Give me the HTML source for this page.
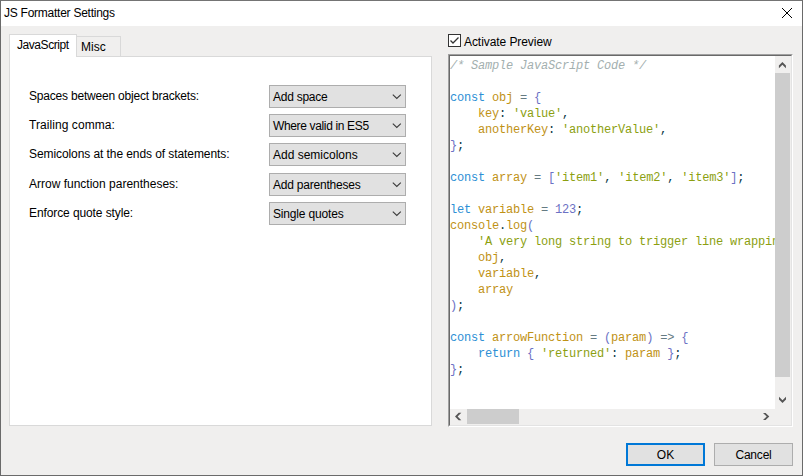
<!DOCTYPE html>
<html><head><meta charset="utf-8">
<style>
*{box-sizing:border-box;margin:0;padding:0}
html,body{width:803px;height:476px;overflow:hidden;background:#f0efee}
body{position:relative;font-family:"Liberation Sans",sans-serif;font-size:12px;color:#000}
.a{position:absolute}
.t{position:absolute;white-space:pre;line-height:14px;height:14px}
#frame{left:0;top:0;width:803px;height:476px;border:1px solid #6a6a6a;border-top-color:#747474}
#title{left:1px;top:1px;width:801px;height:25px;background:#fff}
.tab{position:absolute;border:1px solid #d9d9d9;border-bottom:none}
#panel{left:9px;top:56px;width:423px;height:370px;background:#fff;border:1px solid #d9d9d9}
.cb{position:absolute;left:269px;width:137px;height:23px;background:#e1e1e1;border:1px solid #adadad}
.cb span{position:absolute;left:3px;top:4px;line-height:14px;white-space:pre}
.cb svg{position:absolute;left:122px;top:8px}
.btn{position:absolute;top:443px;width:79px;height:23px;background:#e1e1e1;border:1px solid #adadad;text-align:center}
pre{font-family:"Liberation Mono",monospace;font-size:12px;line-height:16px;letter-spacing:-0.2px;color:#073642}
.k{color:#2d8fd5}.v{color:#bf9215}.s{color:#8c9f10}.p{color:#6c71c4}.o{color:#657b83}.c{color:#a3afaf;font-style:italic}
</style></head><body>
<div class="a" id="frame"></div>
<div class="a" id="title"></div>
<div class="t" style="left:4px;top:6px;letter-spacing:-0.25px">JS Formatter Settings</div>
<svg class="a" style="left:781px;top:7px" width="12" height="12" viewBox="0 0 12 12"><path d="M1 1L11 11M11 1L1 11" stroke="#000" stroke-width="1"/></svg>

<!-- tabs -->
<div id="panel" class="a"></div>
<div class="tab" style="left:76px;top:36px;width:45px;height:20px;background:#f0efee"></div>
<div class="tab" style="left:9px;top:34px;width:68px;height:23px;background:#fff"></div>
<div class="t" style="left:17px;top:38px;letter-spacing:-0.44px">JavaScript</div>
<div class="t" style="left:81px;top:40px">Misc</div>

<div class="t" style="left:29px;top:89px;letter-spacing:-0.2px">Spaces between object brackets:</div>
<div class="t" style="left:29px;top:118px;letter-spacing:0.07px">Trailing comma:</div>
<div class="t" style="left:29px;top:147px;letter-spacing:-0.08px">Semicolons at the ends of statements:</div>
<div class="t" style="left:29px;top:177px">Arrow function parentheses:</div>
<div class="t" style="left:29px;top:206px;letter-spacing:-0.1px">Enforce quote style:</div>

<div class="cb" style="top:85px"><span style="letter-spacing:-0.25px">Add space</span><svg width="10" height="7"><path d="M0.8 0.6L4.8 4.4L8.8 0.6" fill="none" stroke="#3a3a3a" stroke-width="1.1"/></svg></div>
<div class="cb" style="top:114px"><span style="letter-spacing:-0.35px">Where valid in ES5</span><svg width="10" height="7"><path d="M0.8 0.6L4.8 4.4L8.8 0.6" fill="none" stroke="#3a3a3a" stroke-width="1.1"/></svg></div>
<div class="cb" style="top:143px"><span>Add semicolons</span><svg width="10" height="7"><path d="M0.8 0.6L4.8 4.4L8.8 0.6" fill="none" stroke="#3a3a3a" stroke-width="1.1"/></svg></div>
<div class="cb" style="top:173px"><span style="letter-spacing:-0.21px">Add parentheses</span><svg width="10" height="7"><path d="M0.8 0.6L4.8 4.4L8.8 0.6" fill="none" stroke="#3a3a3a" stroke-width="1.1"/></svg></div>
<div class="cb" style="top:202px"><span style="letter-spacing:-0.17px">Single quotes</span><svg width="10" height="7"><path d="M0.8 0.6L4.8 4.4L8.8 0.6" fill="none" stroke="#3a3a3a" stroke-width="1.1"/></svg></div>

<!-- checkbox -->
<div class="a" style="left:448px;top:34px;width:13px;height:13px;border:1px solid #333;background:#fff"></div>
<svg class="a" style="left:448px;top:34px" width="13" height="13"><path d="M2.5 6.5L5 9L10.5 3.5" fill="none" stroke="#333" stroke-width="1.3"/></svg>
<div class="t" style="left:464px;top:35px;letter-spacing:-0.07px">Activate Preview</div>

<!-- code -->
<div class="a" style="left:448px;top:54px;width:345px;height:373px;border:1px solid;border-color:#a0a0a0 #fff #fff #a0a0a0"></div>
<div class="a" style="left:449px;top:55px;width:343px;height:371px;border:1px solid;border-color:#696969 #e3e3e3 #e3e3e3 #696969;background:#fff"></div>
<div class="a" style="left:450px;top:56px;width:325px;height:353px;overflow:hidden">
<pre class="a" style="left:0px;top:2px">
<span class="c">/* Sample JavaScript Code */</span>

<span class="k">const</span> <span class="v">obj</span> <span class="o">=</span> <span class="p">{</span>
    <span class="v">key</span>: <span class="s">'value'</span>,
    <span class="v">anotherKey</span>: <span class="s">'anotherValue'</span>,
<span class="p">}</span>;

<span class="k">const</span> <span class="v">array</span> <span class="o">=</span> <span class="p">[</span><span class="s">'item1'</span>, <span class="s">'item2'</span>, <span class="s">'item3'</span><span class="p">]</span>;

<span class="k">let</span> <span class="v">variable</span> <span class="o">=</span> <span class="p">123</span>;
<span class="v">console</span>.<span class="v">log</span><span class="p">(</span>
    <span class="s">'A very long string to trigger line wrapping when the preview is narrow'</span>,
    <span class="v">obj</span>,
    <span class="v">variable</span>,
    <span class="v">array</span>
<span class="p">)</span>;

<span class="k">const</span> <span class="v">arrowFunction</span> <span class="o">=</span> <span class="p">(</span><span class="v">param</span><span class="p">)</span> <span class="o">=&gt;</span> <span class="p">{</span>
    <span class="k">return</span> <span class="p">{</span> <span class="s">'returned'</span>: <span class="v">param</span> <span class="p">}</span>;
<span class="p">}</span>;
</pre>
</div>
<div class="a" style="left:775px;top:56px;width:16px;height:353px;background:#f0efee"></div>
<div class="a" style="left:775px;top:73px;width:15px;height:304px;background:#cdcdcd"></div>
<div class="a" style="left:450px;top:409px;width:325px;height:16px;background:#f0efee"></div>
<div class="a" style="left:467px;top:409px;width:52px;height:15px;background:#cdcdcd"></div>
<div class="a" style="left:775px;top:409px;width:16px;height:16px;background:#f0efee"></div>
<svg class="a" style="left:0;top:0" width="803" height="476" viewBox="0 0 803 476">
<g fill="#555555">
<polygon points="782.4,62 785.9,65.5 785.9,68.2 782.4,64.7 778.9,68.2 778.9,65.5"/>
<polygon points="782.5,403 786,399.5 786,396.8 782.5,400.3 779,396.8 779,399.5"/>
<polygon points="455,416.5 458.7,412.8 461.3,412.8 457.6,416.5 461.3,420.2 458.7,420.2"/>
<polygon points="769.3,416.5 765.6,412.9 763,412.9 766.7,416.5 763,420.1 765.6,420.1"/>
</g>
</svg>

<!-- buttons -->
<div class="btn" style="left:626px;border:2px solid #0078d7;line-height:21px">OK</div>
<div class="btn" style="left:714px;line-height:23px;letter-spacing:-0.2px">Cancel</div>
</body></html>
